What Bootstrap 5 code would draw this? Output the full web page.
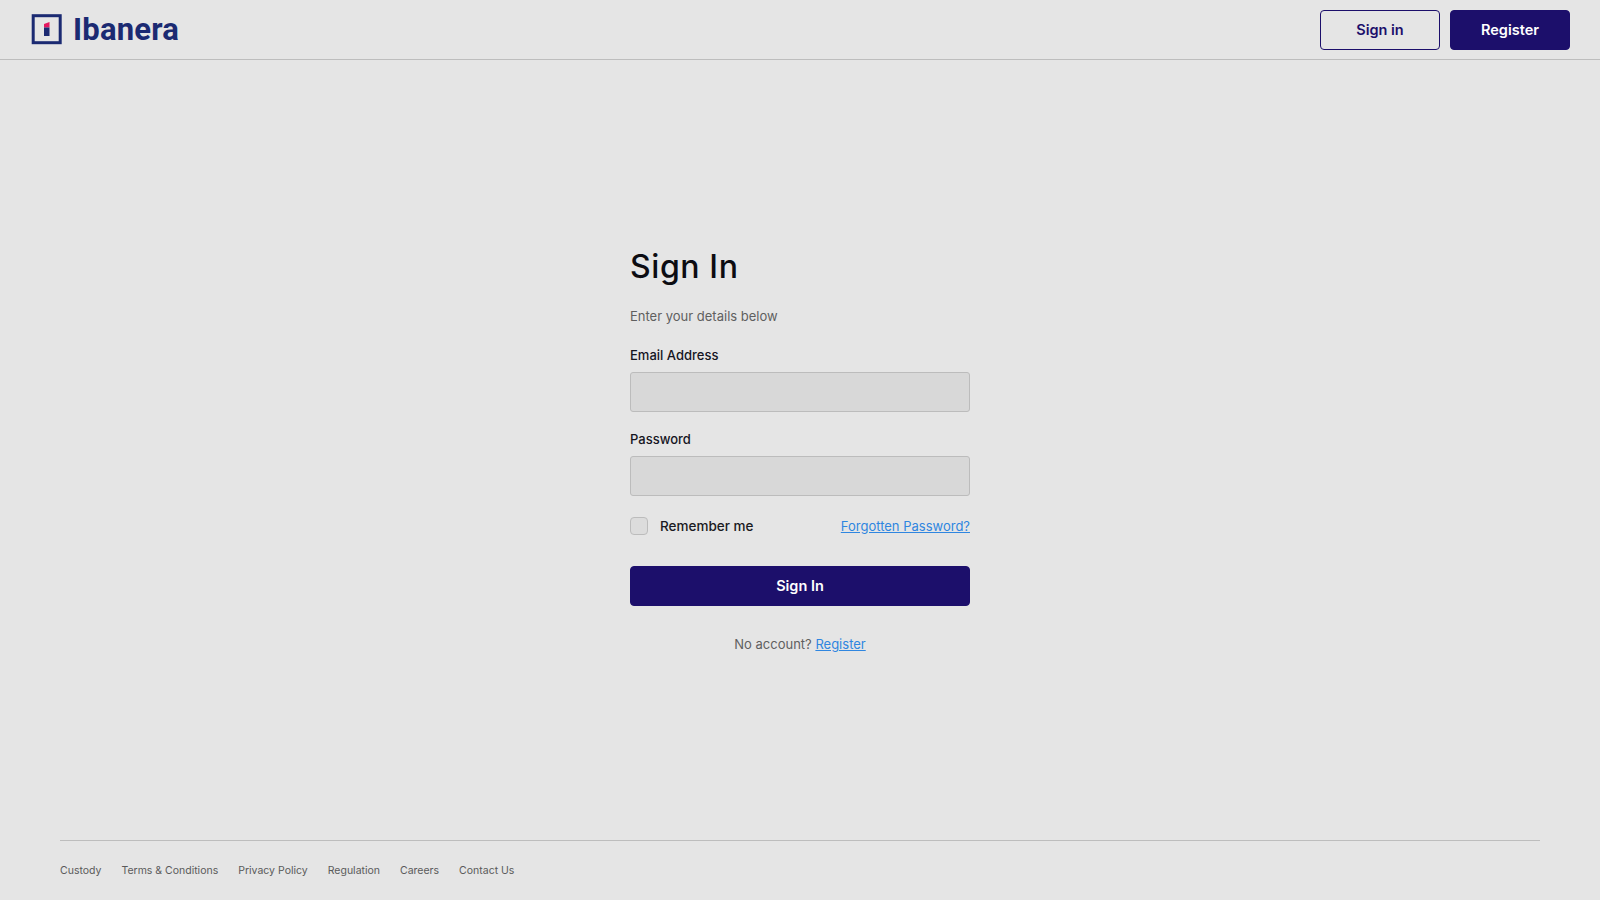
<!DOCTYPE html>
<html lang="en">
<head>
<meta charset="utf-8">
<title>Ibanera</title>
<link href="https://cdn.jsdelivr.net/npm/bootstrap@5.3.0/dist/css/bootstrap.min.css" rel="stylesheet">
<style>
html,body{height:100%}
body{background:#e5e5e5;font-family:Inter,"Open Sans",sans-serif;color:#111;height:900px;overflow:hidden}
.top-bar{height:60px;border-bottom:1px solid #bdbdbd;padding:10px 30px 0 31px}
.brand-link{margin-top:4px;gap:11px}
.brand-name{font-family:Roboto,sans-serif;font-weight:700;font-size:31px;line-height:30px;color:#1b2a72;letter-spacing:.2px}
.brand-mark{width:31px;height:31px;display:block}
.top-actions{gap:10px}
.act-btn{width:120px;height:40px;font-size:14.5px;font-weight:600;border-radius:4px;padding:0;display:flex;align-items:center;justify-content:center}
.act-outline{border:1px solid #1c0f6b;color:#1c0f6b;background:transparent}
.act-solid{border:1px solid #1c0f6b;background:#1c0f6b;color:#fff}
.act-solid:hover{background:#1c0f6b;color:#fff}
.sign-box{width:340px}
.sign-title{font-size:32px;font-weight:500;line-height:40px;margin:0 0 19px;color:#0c0c12;letter-spacing:.6px}
.sign-sub{font-size:13px;line-height:20px;color:#5f5f5f;margin:0 0 19px}
.field-label{font-size:13px;font-weight:500;line-height:20px;margin:0 0 7px;color:#15151f;display:block}
.field-input{height:40px;background:#d8d8d8;border:1px solid #bcbcbc;border-radius:3px}
.field-input:focus{background:#d8d8d8;border-color:#bcbcbc;box-shadow:none}
.field-wrap{margin-bottom:17px}
.remember-row{margin-top:21px;margin-bottom:31px;height:18px}
.tick-box{width:18px;height:18px;margin:0;background-color:#dcdcdc;border:1px solid #bcbcbc;border-radius:3px}
.remember-text{font-size:13.5px;line-height:20px;font-weight:500;color:#1a1a22;margin-left:12px}
.blue-link{color:#2f86e0;font-size:13px;line-height:20px}
.submit-btn{height:40px;font-size:14.5px;font-weight:600;border-radius:4px;background:#1c0f6b;border:1px solid #1c0f6b;color:#fff;padding:0}
.submit-btn:hover{background:#1c0f6b;color:#fff}
.account-line{font-size:13px;color:#5f5f5f;line-height:20px;margin:28px 0 0}
.foot-area{margin:0 60px;height:60px;border-top:1px solid #bdbdbd;padding-top:20px;gap:20px}
.foot-link{font-size:10.5px;line-height:20px;color:#5a5a5a;text-decoration:none}
</style>
</head>
<body class="d-flex flex-column">
<header class="top-bar d-flex align-items-start justify-content-between flex-shrink-0">
  <a class="brand-link d-flex align-items-center text-decoration-none" href="#">
    <svg class="brand-mark" viewBox="0 0 31 31" aria-hidden="true">
      <rect x="2.2" y="1.7" width="27" height="27" fill="none" stroke="#1b2a72" stroke-width="3"/>
      <path d="M13 13.5 V10 L18.5 8 V13.5 Z" fill="#e5175f"/>
      <rect x="13" y="13.5" width="5.5" height="8.5" fill="#1b2a72"/>
    </svg>
    <span class="brand-name">Ibanera</span>
  </a>
  <div class="d-flex top-actions">
    <a class="btn act-btn act-outline" href="#">Sign in</a>
    <a class="btn act-btn act-solid" href="#">Register</a>
  </div>
</header>
<main class="flex-grow-1 d-flex align-items-center justify-content-center">
  <form class="sign-box">
    <h1 class="sign-title">Sign In</h1>
    <p class="sign-sub">Enter your details below</p>
    <div class="field-wrap">
      <label class="field-label" for="em">Email Address</label>
      <input id="em" type="email" class="form-control field-input">
    </div>
    <div>
      <label class="field-label" for="pw">Password</label>
      <input id="pw" type="password" class="form-control field-input">
    </div>
    <div class="remember-row d-flex align-items-center justify-content-between">
      <div class="d-flex align-items-center">
        <input id="rm" type="checkbox" class="form-check-input tick-box">
        <label for="rm" class="remember-text">Remember me</label>
      </div>
      <a class="blue-link" href="#">Forgotten Password?</a>
    </div>
    <button type="button" class="btn submit-btn w-100">Sign In</button>
    <p class="account-line text-center">No account? <a class="blue-link" href="#">Register</a></p>
  </form>
</main>
<footer class="foot-area flex-shrink-0 d-flex align-items-start">
  <a class="foot-link" href="#">Custody</a>
  <a class="foot-link" href="#">Terms &amp; Conditions</a>
  <a class="foot-link" href="#">Privacy Policy</a>
  <a class="foot-link" href="#">Regulation</a>
  <a class="foot-link" href="#">Careers</a>
  <a class="foot-link" href="#">Contact Us</a>
</footer>
<script src="https://cdn.jsdelivr.net/npm/bootstrap@5.3.0/dist/js/bootstrap.bundle.min.js"></script>
</body>
</html>
